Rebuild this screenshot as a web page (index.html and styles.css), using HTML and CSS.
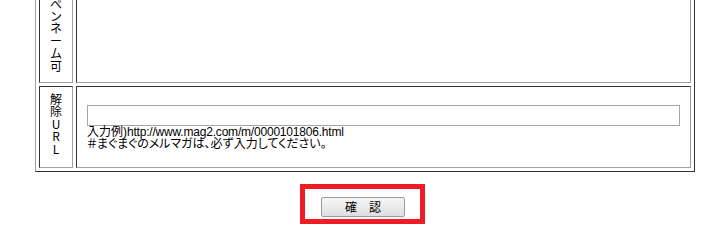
FILE: index.html
```html
<!DOCTYPE html>
<html lang="ja">
<head>
<meta charset="utf-8">
<title>解除</title>
<link rel="stylesheet" href="styles.css">
</head>
<body>
<div class="page">
  <table class="form-table">
    <tr>
      <td class="label label-bottom">ペ<br>ン<br>ネ<br>ー<br>ム<br>可</td>
      <td class="field"><div class="blank"></div></td>
    </tr>
    <tr>
      <td class="label label-mid">解<br>除<br>U<br>R<br>L</td>
      <td class="field field-mid">
        <input class="url-input" type="text">
        <div class="note">入力例)<span class="url">http://www.mag2.com/m/0000101806.html</span><br>＃まぐまぐのメルマガは、必ず入力してください。</div>
      </td>
    </tr>
  </table>
  <div class="actions">
    <div class="highlight"><button class="confirm" type="button">確　認</button></div>
  </div>
</div>
</body>
</html>
```
FILE: styles.css
```css
html, body {
  margin: 0;
  padding: 0;
  background: #ffffff;
}
body {
  font-family: "Liberation Sans", "Noto Sans CJK JP", sans-serif;
  font-size: 12px;
  color: #000000;
}
.page {
  width: 725px;
}
.form-table {
  margin-top: -73px;
  margin-left: 35px;
  width: 660px;
  table-layout: fixed;
  border-collapse: separate;
  border-spacing: 3px;
  border: 1px solid;
  border-color: #a0a0a0 #333333 #333333 #a0a0a0;
}
.form-table td {
  border: 1px solid;
  border-color: #333333 #a0a0a0 #a0a0a0 #333333;
  padding: 0;
}
.label {
  width: 32px;
  text-align: center;
  line-height: 12.4px;
  font-family: "Noto Sans CJK JP", sans-serif;
}
.label-bottom {
  vertical-align: bottom;
  padding-bottom: 10px !important;
}
.label-mid {
  vertical-align: top;
  padding: 6px 0 12px !important;
}
.blank {
  height: 150px;
}
.field-mid {
  vertical-align: middle;
  padding: 0 10px !important;
}
.url-input {
  display: block;
  box-sizing: border-box;
  width: 100%;
  height: 21px;
  margin: 0;
  padding: 0 2px;
  border: 1px solid #a5a5a5;
  background: #ffffff;
  outline: none;
}
.note {
  line-height: 12px;
  white-space: nowrap;
  font-feature-settings: "palt";
}
.url {
  letter-spacing: -0.2px;
}
.actions {
  margin-top: 12px;
  text-align: center;
}
.highlight {
  display: inline-block;
  border: 5px solid #ee1c24;
  padding: 8px 15px 2px 16px;
  line-height: 0;
}
.confirm {
  box-sizing: border-box;
  width: 84px;
  height: 20px;
  margin: 0;
  padding: 0;
  border: 1px solid #9a9a9a;
  border-radius: 2px;
  background: linear-gradient(#f7f7f7, #dedede);
  font-family: "Noto Sans CJK JP", sans-serif;
  font-size: 12px;
  line-height: 18px;
  color: #000000;
}
```
